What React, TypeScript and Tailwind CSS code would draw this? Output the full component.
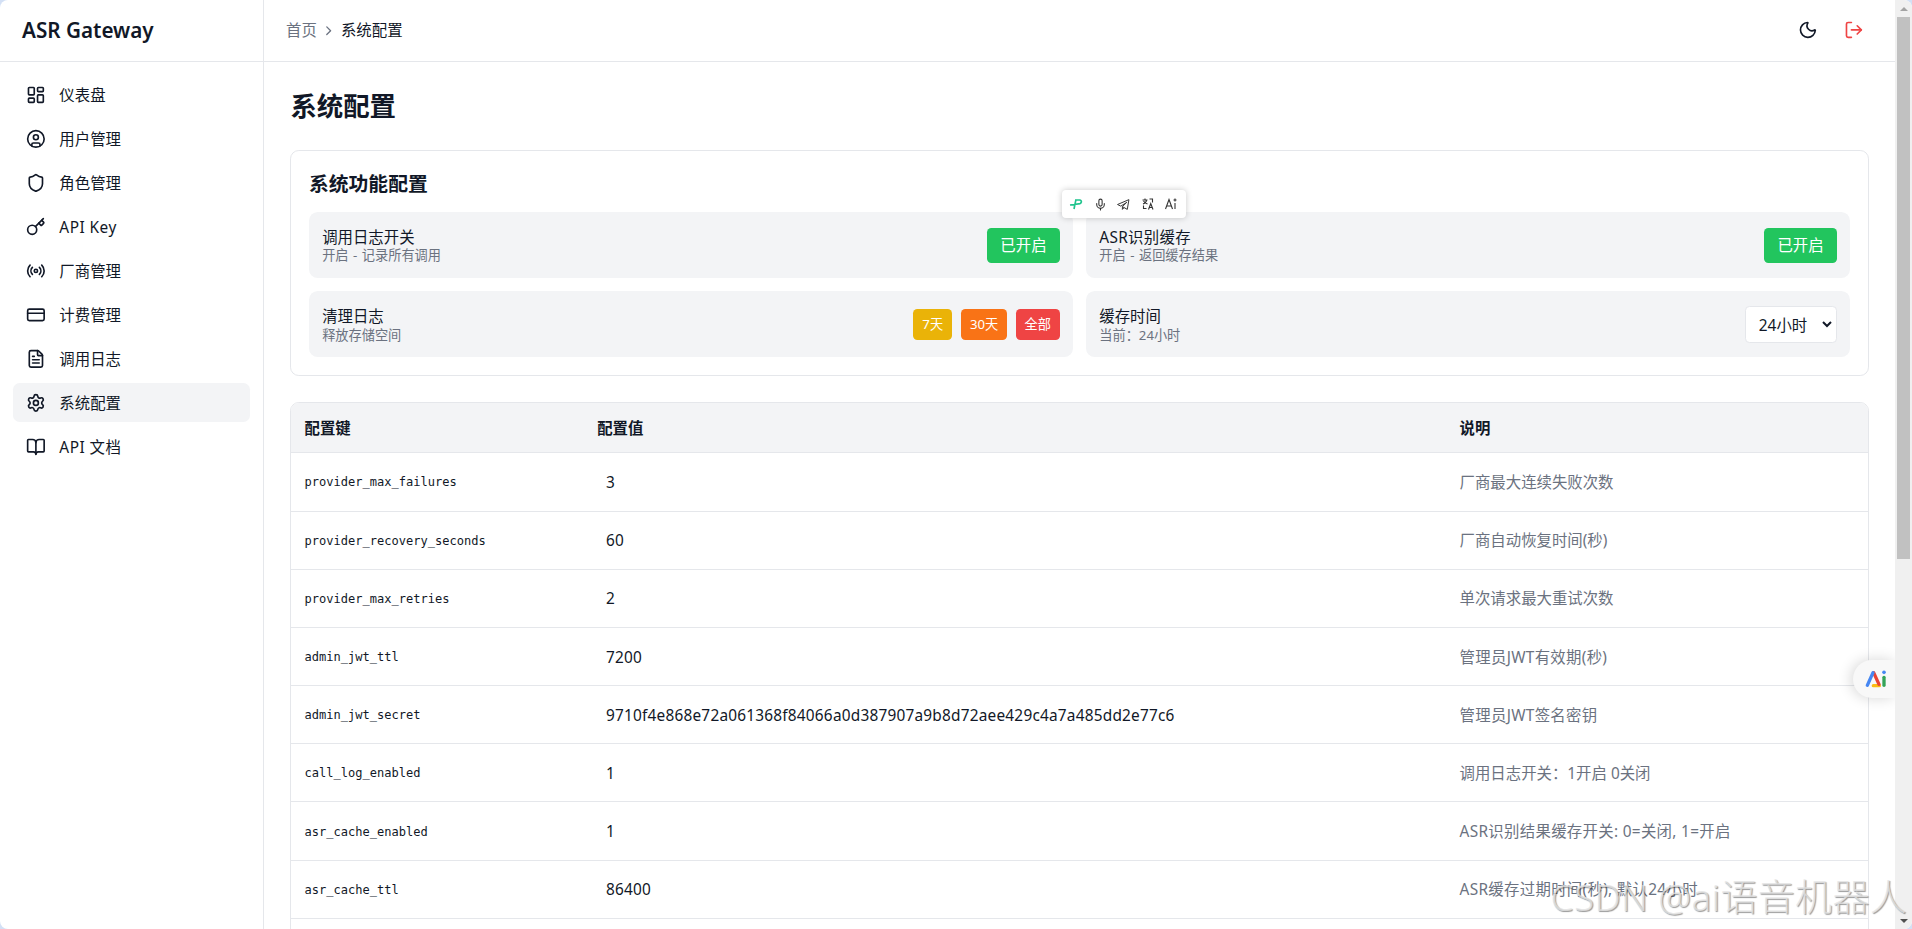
import React, { useState } from "react";
import {
  BookOpen,
  ChevronRight,
  CircleUser,
  CreditCard,
  FileText,
  Key,
  LayoutDashboard,
  LogOut,
  Mic,
  Moon,
  Radio,
  Settings,
  Shield,
} from "lucide-react";

type NavItem = { label: string; icon: React.ElementType };
type ConfigRow = { key: string; value: string; desc: string };

const navItems: NavItem[] = [
  { label: "仪表盘", icon: LayoutDashboard },
  { label: "用户管理", icon: CircleUser },
  { label: "角色管理", icon: Shield },
  { label: "API Key", icon: Key },
  { label: "厂商管理", icon: Radio },
  { label: "计费管理", icon: CreditCard },
  { label: "调用日志", icon: FileText },
  { label: "系统配置", icon: Settings },
  { label: "API 文档", icon: BookOpen },
];

const configs: ConfigRow[] = [
  { key: "provider_max_failures", value: "3", desc: "厂商最大连续失败次数" },
  { key: "provider_recovery_seconds", value: "60", desc: "厂商自动恢复时间(秒)" },
  { key: "provider_max_retries", value: "2", desc: "单次请求最大重试次数" },
  { key: "admin_jwt_ttl", value: "7200", desc: "管理员JWT有效期(秒)" },
  {
    key: "admin_jwt_secret",
    value: "9710f4e868e72a061368f84066a0d387907a9b8d72aee429c4a7a485dd2e77c6",
    desc: "管理员JWT签名密钥",
  },
  { key: "call_log_enabled", value: "1", desc: "调用日志开关：1开启 0关闭" },
  { key: "asr_cache_enabled", value: "1", desc: "ASR识别结果缓存开关: 0=关闭, 1=开启" },
  { key: "asr_cache_ttl", value: "86400", desc: "ASR缓存过期时间(秒), 默认24小时" },
  { key: "", value: "", desc: "" },
];

// labels that mix in Latin letters get slightly looser spacing
const hasLatin = (text: string) => /[A-Z]/.test(text);

function Sidebar() {
  const [active, setActive] = useState("系统配置");

  return (
    <aside className="w-60 shrink-0 border-r border-[#e5e7eb]">
      <div className="flex h-14 items-center border-b border-[#e5e7eb] px-5">
        <span className="text-[18.8px] font-semibold">ASR Gateway</span>
      </div>
      <nav className="flex flex-col gap-1 p-3">
        {navItems.map(({ label, icon: Icon }) => (
          <button
            key={label}
            onClick={() => setActive(label)}
            className={`flex h-9 items-center gap-3 rounded-md px-3 text-left text-sm ${
              active === label ? "bg-[#f3f4f6]" : ""
            }`}
          >
            <Icon className="size-[18px]" />
            <span className={hasLatin(label) ? "pt-0.5 tracking-[0.03em]" : "pt-0.5"}>{label}</span>
          </button>
        ))}
      </nav>
    </aside>
  );
}

function Header() {
  return (
    <header className="flex h-14 items-center justify-between border-b border-[#e5e7eb] px-5">
      <div className="flex items-center gap-1 text-sm">
        <span className="pt-0.5 text-[#6b7280]">首页</span>
        <ChevronRight className="size-3.5 text-[#6b7280]" />
        <span className="pt-0.5">系统配置</span>
      </div>
      <div className="flex items-center gap-2">
        <button className="p-2">
          <Moon className="size-[18px]" />
        </button>
        <button className="p-2 text-[#ef4444]">
          <LogOut className="size-[18px]" />
        </button>
      </div>
    </header>
  );
}

function Feature({
  title,
  hint,
  children,
}: {
  title: string;
  hint: string;
  children: React.ReactNode;
}) {
  return (
    <div className="flex h-15 items-center justify-between rounded-lg bg-[#f3f4f6] px-3">
      <div>
        <div className={`pt-0.5 text-sm leading-[18px] ${hasLatin(title) ? "tracking-[0.02em]" : ""}`}>
          {title}
        </div>
        <div className="text-xs [word-spacing:1px] text-[#6b7280]">{hint}</div>
      </div>
      <div className="flex items-center gap-2">{children}</div>
    </div>
  );
}

function FeatureCard() {
  return (
    <section className="mb-6 rounded-lg border border-[#e5e7eb] p-4">
      <h2 className="mb-3 pt-px text-lg leading-[27px] font-semibold">系统功能配置</h2>
      <div className="grid grid-cols-2 gap-3">
        <Feature title="调用日志开关" hint="开启 - 记录所有调用">
          <button className="h-8 rounded bg-[#22c55e] px-3 pt-px text-sm text-white">已开启</button>
        </Feature>
        <Feature title="ASR识别缓存" hint="开启 - 返回缓存结果">
          <button className="h-8 rounded bg-[#22c55e] px-3 pt-px text-sm text-white">已开启</button>
        </Feature>
        <Feature title="清理日志" hint="释放存储空间">
          <button className="rounded bg-[#eab308] px-2 py-1.5 text-xs tracking-[0.02em] text-white">7天</button>
          <button className="rounded bg-[#f97316] px-2 py-1.5 text-xs text-white">30天</button>
          <button className="rounded bg-[#ef4444] px-2 py-1.5 text-xs text-white">全部</button>
        </Feature>
        <Feature title="缓存时间" hint="当前：24小时">
          <select
            defaultValue="24"
            className="h-[34px] w-[83.5px] rounded border border-[#e5e7eb] bg-white px-2 pt-0.5 text-sm"
          >
            <option value="24">24小时</option>
          </select>
        </Feature>
      </div>
    </section>
  );
}

function ConfigTable() {
  return (
    <div className="overflow-hidden rounded-lg border border-[#e5e7eb]">
      <table className="w-full table-fixed text-left text-sm">
        <colgroup>
          <col className="w-[266px]" />
          <col className="w-[784px]" />
          <col />
        </colgroup>
        <thead>
          <tr className="h-[45px] border-b border-[#e5e7eb] bg-[#f3f4f6]">
            <th className="px-3 pt-0.5 font-semibold">配置键</th>
            <th className="px-3 pt-0.5 font-semibold">配置值</th>
            <th className="px-3 pt-0.5 font-semibold">说明</th>
          </tr>
        </thead>
        <tbody>
          {configs.map((row) => (
            <tr key={row.key} className="h-[52.9px] border-b border-[#e5e7eb]">
              <td className="px-3 pt-0.5 font-['DejaVu_Sans_Mono',monospace] text-[10.95px]">{row.key}</td>
              <td className="px-5 pt-0.5 tracking-[0.0136em]">{row.value}</td>
              <td
                className={`px-3 pt-0.5 text-[#6b7280] ${hasLatin(row.desc) ? "tracking-[0.02em]" : ""}`}
              >
                {row.desc}
              </td>
            </tr>
          ))}
        </tbody>
      </table>
    </div>
  );
}

function SelectionToolbar() {
  return (
    <div className="absolute top-[190px] left-[1062px] flex h-7 w-[124px] items-center gap-[10.5px] rounded bg-white pl-[7px] text-[#333] shadow-[0_0_6px_rgba(0,0,0,0.22)]">
      <svg className="h-3 w-[14px] shrink-0" viewBox="0 0 42 36" fill="none" stroke="#1fc48d" strokeWidth="5">
        <path d="M3 21L34 17M21 4L15 33M18 6H32Q38 7 37 12Q36 17 30 18" />
      </svg>
      <Mic className="size-[13px] shrink-0" strokeWidth={2} />
      <svg className="size-[13px] shrink-0" viewBox="0 0 24 24" fill="none" stroke="currentColor" strokeWidth="1.8" strokeLinejoin="round">
        <path d="M22 3L1 12L7 15L18 8L10 16L19 21L22 3ZM10 16V21L13 18" />
      </svg>
      <svg className="ml-px size-3 shrink-0" viewBox="0 0 24 24" fill="none" stroke="currentColor" strokeWidth="2.2">
        <path d="M1 4H11M6 1V4M2 12C7 10 9 7 9 4M3 6C5 9 8 11 11 12M15 2H21V9M3 15V21H9M13 23L17.500 11L22 23M14.500 19H20.500" />
      </svg>
      <svg className="ml-px size-3 shrink-0" viewBox="0 0 24 24" fill="none" stroke="currentColor" strokeWidth="2.2">
        <path d="M1 22L8 3L15 22M3.500 16H12.500M20 10V22M20 1V7M17 4H23" />
      </svg>
    </div>
  );
}

function AiBubble() {
  return (
    <div className="absolute top-[660px] right-[17px] flex h-[38px] w-[42px] items-center rounded-l-full bg-[#f8f8f8] pl-[11px] shadow-[-2px_0_14px_rgba(0,0,0,0.16)] [clip-path:inset(-20px_0_-20px_-20px)]">
      <svg className="h-5 w-6" viewBox="0 0 72 60" fill="none" strokeLinecap="round" strokeWidth="10">
        <path d="M28 50H46" stroke="#fbbc14" />
        <path d="M29 11L45 46" stroke="#ea4335" />
        <path d="M10 49L27 11" stroke="#4687f2" />
        <path d="M60 25V49" stroke="#34a358" />
        <circle cx="60" cy="10" r="5.500" fill="#4687f2" />
      </svg>
    </div>
  );
}

function Scrollbar() {
  return (
    <div className="flex w-[17px] shrink-0 flex-col items-center bg-[#f0f0f0]">
      <div className="flex h-[17px] items-center">
        <svg className="h-1 w-2" viewBox="0 0 8 4">
          <path d="M0 4L4 0L8 4Z" fill="#a3a3a3" />
        </svg>
      </div>
      <div className="h-[542px] w-[13px] bg-[#c1c1c1]" />
      <div className="mt-auto flex h-[17px] items-center">
        <svg className="h-1 w-2" viewBox="0 0 8 4">
          <path d="M0 0L4 4L8 0Z" fill="#505050" />
        </svg>
      </div>
    </div>
  );
}

export default function App() {
  return (
    <div className="bg-[#d3e0f5]">
      <div className="relative flex h-screen overflow-hidden rounded-lg bg-white font-['Noto_Sans','Noto_Sans_CJK_SC',sans-serif] text-[#111827]">
        <div className="min-w-0 flex-1 overflow-hidden">
          <div className="flex h-[850px] [zoom:1.1]">
            <Sidebar />
            <div className="min-w-0 flex-1">
              <Header />
              <main className="p-6">
                <h1 className="mb-6 pt-px text-2xl leading-[31px] font-bold">系统配置</h1>
                <FeatureCard />
                <ConfigTable />
              </main>
            </div>
          </div>
        </div>
        <Scrollbar />
        <SelectionToolbar />
        <AiBubble />
        <div className="pointer-events-none absolute right-[5px] bottom-[5px] text-[37px] leading-[54px] font-light tracking-[0.3px] whitespace-nowrap text-[#e4e4e4]/80 [text-shadow:1px_1px_1px_rgba(0,0,0,0.4)]">
          CSDN @ai语音机器人
        </div>
      </div>
    </div>
  );
}
